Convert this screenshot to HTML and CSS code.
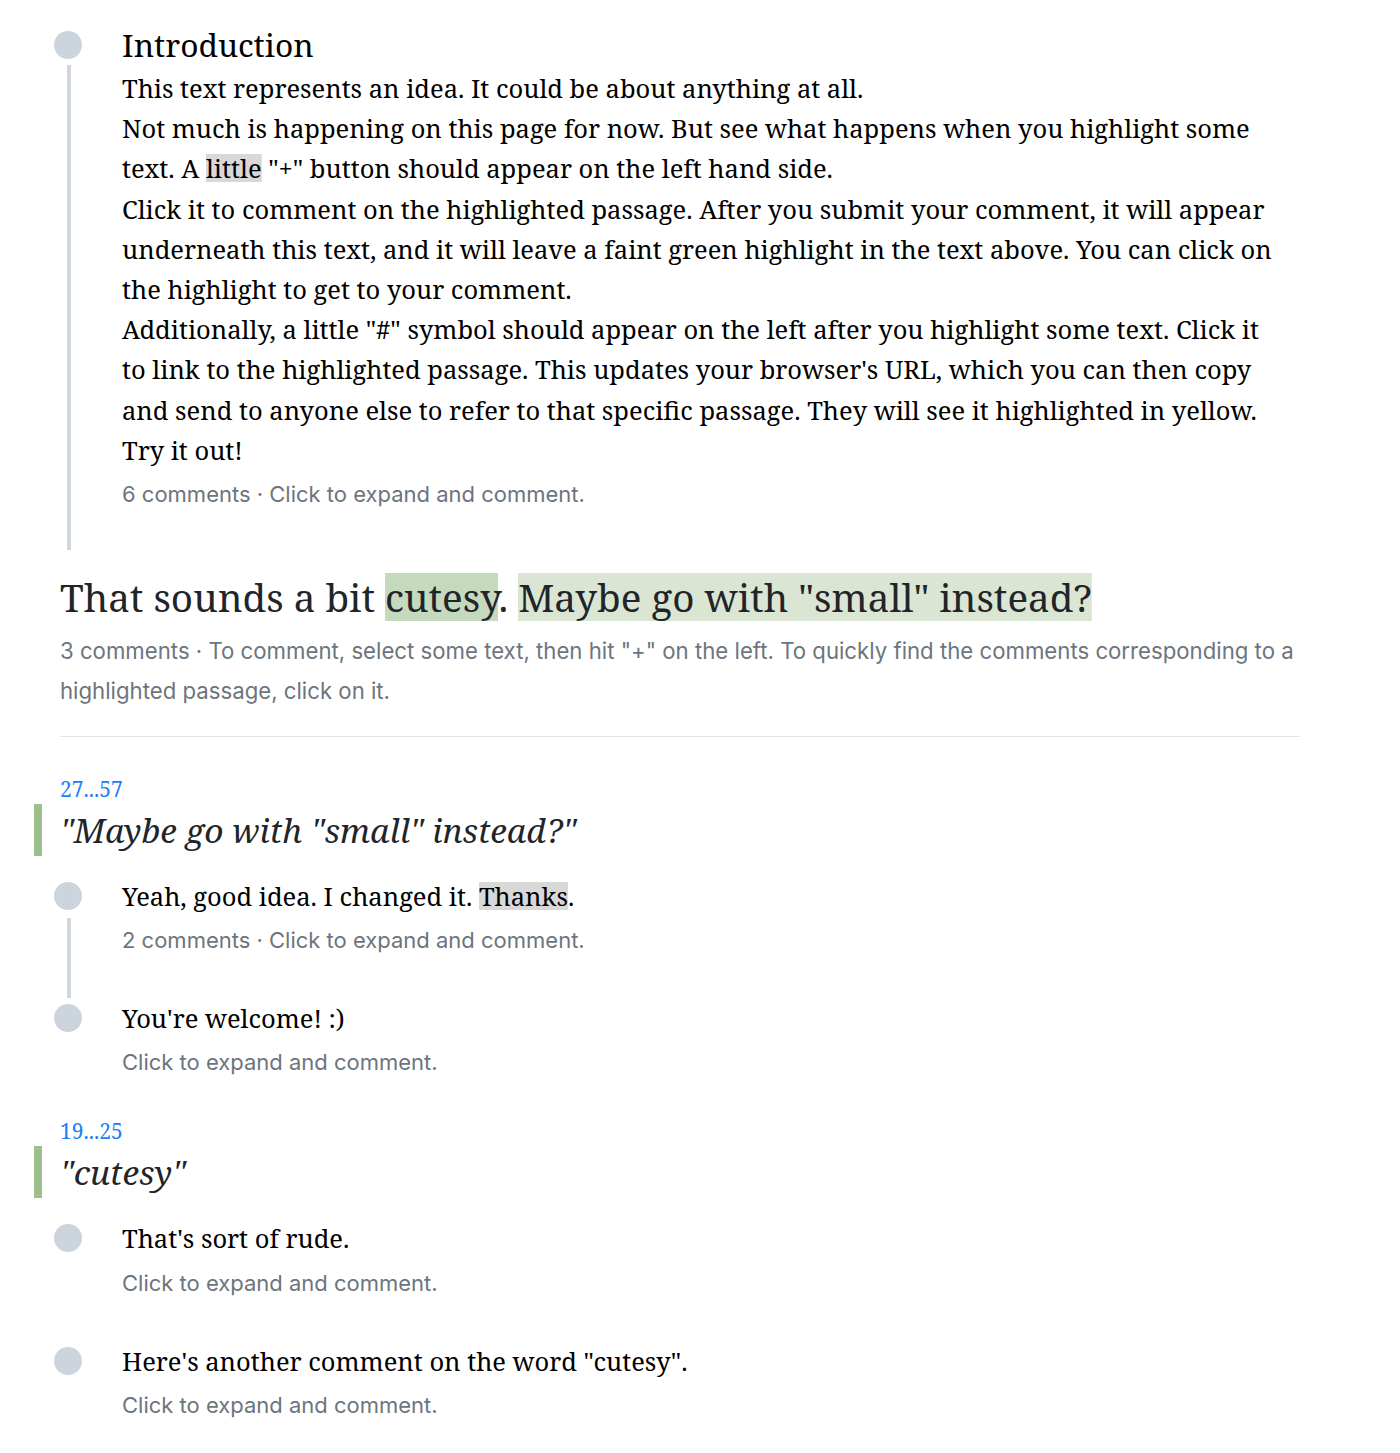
FILE: index.html
```html
<!DOCTYPE html>
<html lang="en">
<head>
<meta charset="utf-8">
<title>Comments</title>
<link rel="stylesheet" href="styles.css">
</head>
<body>
<main class="page">

  <article class="comment comment--intro">
    <div class="rail"><span class="dot"></span><span class="line"></span></div>
    <div class="content">
      <h2 class="comment-title">Introduction</h2>
      <div class="comment-body">
        <p>This text represents an idea. It could be about anything at all.</p>
        <p>Not much is happening on this page for now. But see what happens when you highlight some text. A <span class="mark-grey">little</span> "+" button should appear on the left hand side.</p>
        <p>Click it to comment on the highlighted passage. After you submit your comment, it will appear underneath this text, and it will leave a faint green highlight in the text above. You can click on the highlight to get to your comment.</p>
        <p>Additionally, a little "#" symbol should appear on the left after you highlight some text. Click it to link to the highlighted passage. This updates your browser's URL, which you can then copy and send to anyone else to refer to that specific passage. They will see it highlighted in yellow. Try it out!</p>
      </div>
      <div class="meta">6 comments · Click to expand and comment.</div>
    </div>
  </article>

  <h1 class="headline">That sounds a bit <span class="mark-strong">cutesy</span>. <span class="mark-soft">Maybe go with "small" instead?</span></h1>
  <div class="meta meta--wide">3 comments · To comment, select some text, then hit "+" on the left. To quickly find the comments corresponding to a highlighted passage, click on it.</div>

  <hr class="divider">

  <section class="thread">
    <a class="range">27...57</a>
    <blockquote class="quote">"Maybe go with "small" instead?"</blockquote>
    <div class="comments">
      <article class="comment">
        <div class="rail"><span class="dot"></span><span class="line"></span></div>
        <div class="content">
          <div class="comment-body"><p>Yeah, good idea. I changed it. <span class="mark-grey">Thanks</span>.</p></div>
          <div class="meta">2 comments · Click to expand and comment.</div>
        </div>
      </article>
      <article class="comment">
        <div class="rail"><span class="dot"></span></div>
        <div class="content">
          <div class="comment-body"><p>You're welcome! :)</p></div>
          <div class="meta">Click to expand and comment.</div>
        </div>
      </article>
    </div>
  </section>

  <section class="thread">
    <a class="range">19...25</a>
    <blockquote class="quote">"cutesy"</blockquote>
    <div class="comments">
      <article class="comment">
        <div class="rail"><span class="dot"></span></div>
        <div class="content">
          <div class="comment-body"><p>That's sort of rude.</p></div>
          <div class="meta">Click to expand and comment.</div>
        </div>
      </article>
      <article class="comment">
        <div class="rail"><span class="dot"></span></div>
        <div class="content">
          <div class="comment-body"><p>Here's another comment on the word "cutesy".</p></div>
          <div class="meta">Click to expand and comment.</div>
        </div>
      </article>
    </div>
  </section>

</main>
</body>
</html>
```
FILE: styles.css
```css
* { box-sizing: border-box; }

html, body {
  margin: 0;
  background: #ffffff;
}

body {
  font-family: "Noto Serif", "DejaVu Serif", serif;
  color: #000000;
}

.page {
  width: 1300px;
  padding: 22px 0 0 60px;
}

/* ---------- comment ---------- */
.comment {
  display: grid;
  grid-template-columns: 28px 1fr;
  column-gap: 40px;
  margin-left: -6px;
  padding-bottom: 38px;
}

.comments > .comment:last-child {
  padding-bottom: 34px;
}

.comment--intro {
  padding-bottom: 36px;
}

.rail {
  display: flex;
  flex-direction: column;
  align-items: stretch;
  margin-bottom: -38px;
}

.comment--intro .rail { margin-bottom: -36px; }
.comments > .comment:last-child .rail { margin-bottom: 0; }

.dot {
  width: 28px;
  height: 28px;
  border-radius: 50%;
  background: #ccd5de;
  margin-top: 6px;
  flex: none;
}

.comment--intro .dot { margin-top: 9px; }

.line {
  flex: 1;
  width: 4px;
  margin: 8px 0 0 13px;
  background: #cfd6de;
}

.comment--intro .line { margin-top: 6px; }

.content { min-width: 0; }

.comment-title {
  margin: 0;
  font-weight: 400;
  font-size: 31.7px;
  line-height: 46px;
  color: #000;
}

.comment-body {
  max-width: 1158px;
}

.comment-body p {
  margin: 0;
  font-size: 25.5px;
  line-height: 40.2px;
}

.meta {
  margin-top: 4px;
  font-family: "Inter", "Liberation Sans", sans-serif;
  font-size: 22px;
  line-height: 40px;
  color: #6c757d;
}

.mark-grey {
  background: linear-gradient(#d8d8d8, #d8d8d8) center / 100% 28px no-repeat;
}

/* ---------- headline ---------- */
.headline {
  margin: 22px 0 0;
  font-weight: 400;
  font-size: 38.6px;
  line-height: 50px;
  color: #212529;
}

.mark-strong {
  background: linear-gradient(#c5d9bc, #c5d9bc) center / 100% 48px no-repeat;
}

.mark-soft {
  background: linear-gradient(#dae6d3, #dae6d3) center / 100% 48px no-repeat;
}

.meta--wide {
  margin-top: 9px;
  font-size: 22.2px;
}

.divider {
  margin: 25px 0 0;
  border: 0;
  border-top: 1px solid #e4e4e4;
  height: 0;
}

/* ---------- threads ---------- */
.thread:first-of-type { margin-top: 37px; }

.range {
  display: block;
  font-size: 21px;
  line-height: 30px;
  color: #1a7efb;
  cursor: pointer;
}

.quote {
  margin: 0 0 0 -26px;
  padding-left: 18px;
  border-left: 8px solid #9dbf8c;
  font-style: italic;
  font-size: 33.5px;
  line-height: 52px;
  color: #212529;
}

.comments {
  margin-top: 20px;
}
```
